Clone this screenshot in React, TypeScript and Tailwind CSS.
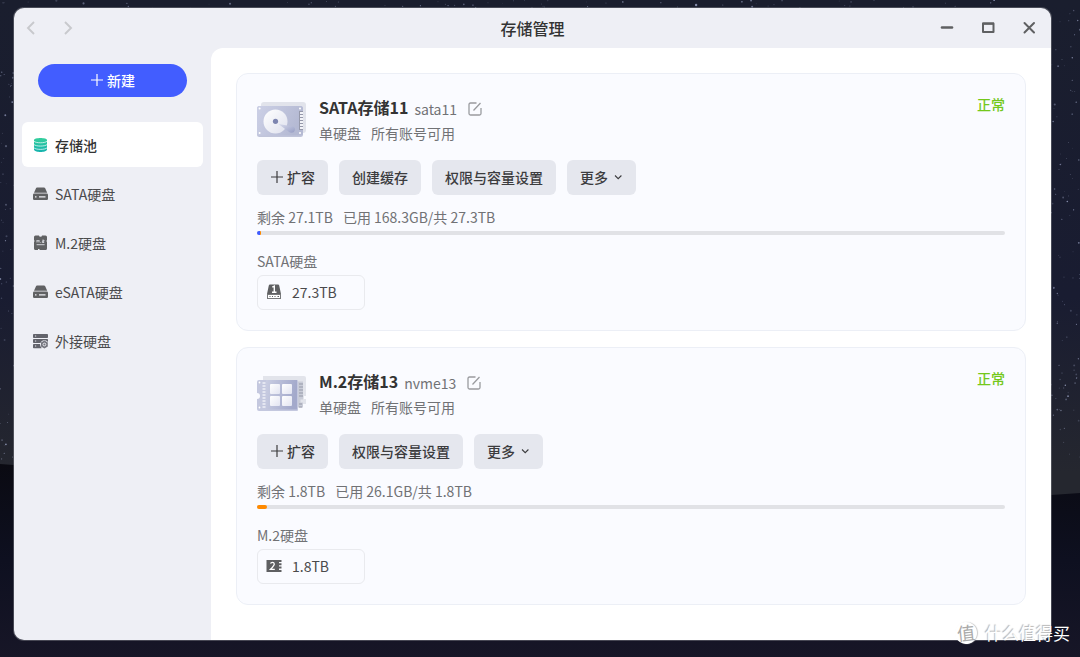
import React from 'react';

interface Segment {
    color: string;
    percent: number;
}

interface Pool {
    id: string;
    name: string;
    alias: string;
    kind: 'sata' | 'm2';
    actions: string[];
    free: string;
    used: string;
    segments: Segment[];
    diskLabel: string;
    diskSize: string;
}

const POOLS: Pool[] = [
    {
        id: 'sata11',
        name: 'SATA存储11',
        alias: 'sata11',
        kind: 'sata',
        actions: ['创建缓存', '权限与容量设置'],
        free: '剩余 27.1TB',
        used: '已用 168.3GB/共 27.3TB',
        segments: [
            { color: '#3f5cff', percent: 0.4 },
            { color: '#ff8a00', percent: 0.15 },
        ],
        diskLabel: 'SATA硬盘',
        diskSize: '27.3TB',
    },
    {
        id: 'nvme13',
        name: 'M.2存储13',
        alias: 'nvme13',
        kind: 'm2',
        actions: ['权限与容量设置'],
        free: '剩余 1.8TB',
        used: '已用 26.1GB/共 1.8TB',
        segments: [{ color: '#ff8a00', percent: 1.3 }],
        diskLabel: 'M.2硬盘',
        diskSize: '1.8TB',
    },
];

// Fixed seed so the sky looks the same on every load
const makeStars = (count: number) => {
    let seed = 7;
    const next = () => {
        seed = (seed * 16807) % 2147483647;
        return seed / 2147483647;
    };
    return Array.from({ length: count }, () => ({
        x: next() * 1080,
        y: next() * 460,
        r: 0.4 + next() * next() * 0.9,
        o: 0.2 + next() * 0.5,
    }));
};

const STARS = makeStars(4000);

const NightSky = () => (
    <svg className="absolute inset-0 h-full w-full" viewBox="0 0 1080 657" preserveAspectRatio="none" aria-hidden="true">
        <defs>
            <linearGradient id="sky" x1="0" y1="0" x2="0" y2="1">
                <stop offset="0" stopColor="#1a1e2e" />
                <stop offset="0.45" stopColor="#191c31" />
                <stop offset="0.72" stopColor="#25272f" />
            </linearGradient>
            <linearGradient id="sea" x1="0" y1="0" x2="0" y2="1">
                <stop offset="0" stopColor="#0a0a12" />
                <stop offset="0.5" stopColor="#0e1020" />
                <stop offset="1" stopColor="#171627" />
            </linearGradient>
        </defs>
        <rect width="1080" height="657" fill="url(#sky)" />
        {STARS.map((s, i) => (
            <circle key={i} cx={s.x} cy={s.y} r={s.r} fill="#b4bde0" opacity={s.o} />
        ))}
        <path d="M0 464L14 465C300 480 800 510 1051 495L1080 493V657H0Z" fill="url(#sea)" />
    </svg>
);

const PoolIcon = () => (
    <svg width="16" height="16" viewBox="0 0 16 16" aria-hidden="true">
        <defs>
            <linearGradient id="pool" x1="0" y1="0" x2="0" y2="1">
                <stop offset="0" stopColor="#35cf9c" />
                <stop offset="1" stopColor="#15b2ae" />
            </linearGradient>
        </defs>
        <path
            d="M2 3C2 .2 15 .2 15 3V12.600C15 15.900 2 15.900 2 12.600Z"
            fill="url(#pool)"
        />
        <path
            d="M2 4.200C3.500 6.300 13.500 6.300 15 4.200M2 7.500C3.500 9.600 13.500 9.600 15 7.500M2 10.800C3.500 12.900 13.500 12.900 15 10.800"
            fill="none"
            stroke="#fff"
            strokeWidth="0.7"
        />
    </svg>
);

const DriveIcon = () => (
    <svg width="16" height="16" viewBox="0 0 16 16" aria-hidden="true">
        <path d="M5 1.500h7q.8 0 1.200.8l2 4.500H2l2-4.500q.3-.8 1-.8Z" fill="#606163" />
        <rect x="1" y="7.600" width="15" height="6.400" rx="1.200" fill="#606163" />
        <path d="M3 10.800h1.500M7 10.800h6.500" stroke="#eeeff5" strokeWidth="1.200" />
    </svg>
);

const M2Icon = () => (
    <svg width="16" height="16" viewBox="0 0 16 16" aria-hidden="true">
        <path
            d="M3.500.500h3.500a1.500 1.200 0 0 0 3 0h3.500q1.500 0 1.500 1.500v3.200l-.8.800.8.800V13.500q0 1.500-1.500 1.500H7.500v-1H6v1H3.500Q2 15 2 13.500V6.800L2.800 6 2 5.200V2Q2 .5 3.500.5Z"
            fill="#606163"
        />
        <path d="M5 7.500V5.200l1 1 1-1v2.300M8.500 7.500h.6M10.200 5.200h1.800v1.100h-1.600v1.200h1.800M4.600 9.700h8" fill="none" stroke="#eeeff5" strokeWidth="0.8" />
    </svg>
);

const ExternalIcon = () => (
    <svg width="16" height="16" viewBox="0 0 16 16" aria-hidden="true">
        <rect x="1" y="1" width="15" height="4" rx="0.800" fill="#62636b" />
        <rect x="1" y="6" width="15" height="4" rx="0.800" fill="#62636b" />
        <rect x="1" y="11" width="9" height="4.200" rx="0.800" fill="#62636b" />
        <path d="M3 3h1.200M3 8h1.200M3 13h1.200" stroke="#eeeff5" strokeWidth="0.9" />
        <circle cx="12.400" cy="11.500" r="4.300" fill="#eeeff5" />
        <path d="M12.400 7.600l3.400 1.900v4l-3.400 1.900-3.400-1.900v-4Z" fill="#75767f" />
        <circle cx="12.400" cy="11.500" r="1.400" fill="none" stroke="#eeeff5" strokeWidth="0.900" />
    </svg>
);

const SataArt = () => (
    <svg width="50" height="36" viewBox="0 0 50 36" className="shrink-0" aria-hidden="true">
        <defs>
            <linearGradient id="hdd" x1="0" y1="0" x2="1" y2="0.300">
                <stop offset="0" stopColor="#ccd0e6" />
                <stop offset="1" stopColor="#b4b9d3" />
            </linearGradient>
            <linearGradient id="platter" x1="0" y1="0" x2="1" y2="1">
                <stop offset="0" stopColor="#fff" />
                <stop offset="1" stopColor="#dfe1ee" />
            </linearGradient>
            <linearGradient id="arm" x1="0" y1="0" x2="1" y2="1">
                <stop offset="0" stopColor="#d9dcec" />
                <stop offset="1" stopColor="#969dc4" />
            </linearGradient>
        </defs>
        <rect x="4" y="0" width="45" height="31" rx="3" fill="#e1e3eb" />
        <rect x="0" y="4" width="46" height="31" rx="2.500" fill="#c0c4da" />
        <rect x="0" y="4" width="46" height="29.500" rx="2.500" fill="url(#hdd)" />
        <rect x="42" y="9" width="4" height="19" fill="#9598aa" />
        <path d="M43 11h3M43 14h3M43 17h3M43 20h3M43 23h3M43 26h3" stroke="#f2f3f8" strokeWidth="1.900" />
        <circle cx="18.500" cy="19.500" r="12" fill="url(#platter)" />
        <circle cx="18.500" cy="19.300" r="2.600" fill="#7d85b0" />
        <path d="M21.500 22l14.500 2.500a3.300 3.300 0 0 1-1.500 6.300q-1.500 0-3-1.300Z" fill="url(#arm)" />
        <circle cx="2.600" cy="6.500" r="1" fill="#fff" />
        <circle cx="2.600" cy="31" r="1" fill="#fff" />
        <circle cx="43" cy="6.500" r="1" fill="#fff" />
        <circle cx="43" cy="31" r="1" fill="#fff" />
    </svg>
);

const M2Art = () => (
    <svg width="50" height="36" viewBox="0 0 50 36" className="shrink-0" aria-hidden="true">
        <defs>
            <linearGradient id="board" x1="0" y1="0" x2="1" y2="0.200">
                <stop offset="0" stopColor="#c9cde2" />
                <stop offset="1" stopColor="#a3a9cb" />
            </linearGradient>
            <linearGradient id="chip" x1="0" y1="0" x2="1" y2="1">
                <stop offset="0" stopColor="#fff" />
                <stop offset="1" stopColor="#e2e4f1" />
            </linearGradient>
        </defs>
        <path d="M6 0h41q2 0 2 2v18h-2v3h2v5H6Z" fill="#e2e4eb" />
        <path d="M2 4h38q1 0 1 1v29q0 1-1 1H2q-2 0-2-2v-10a3 3 0 0 0 0-6V6q0-2 2-2Z" fill="#c4c8df" />
        <path d="M9 4h31v29.500H9Z" fill="url(#board)" />
        <path d="M5.500 7h3M5.500 10h3M5.500 13h3M5.500 16h3M5.500 19h3M5.500 22h3M5.500 25h3M5.500 28h3M5.500 31h3" stroke="#eef0f7" strokeWidth="1.600" />
        <path d="M41 5.500h5v18h-2.500v3H46v5h-5Z" fill="#c9ccd8" />
        <path d="M42 8h4M42 11h4M42 14h4M42 17h4M42 20h4M42 28h3M42 31h3" stroke="#9599a8" strokeWidth="1" />
        <rect x="13" y="8" width="10" height="10" rx="1" fill="url(#chip)" />
        <rect x="25" y="8" width="10" height="10" rx="1" fill="url(#chip)" />
        <rect x="13" y="20" width="10" height="10" rx="1" fill="url(#chip)" />
        <rect x="25" y="20" width="10" height="10" rx="1" fill="url(#chip)" />
        <circle cx="2.500" cy="6.500" r="0.900" fill="#fff" />
        <circle cx="2.500" cy="31.500" r="0.900" fill="#fff" />
    </svg>
);

const SataSlot = () => (
    <svg width="16" height="16" viewBox="0 0 16 16" aria-hidden="true">
        <path d="M4 .5h8q1 0 1.200 1L15 10H1L2.800 1.500Q3 .5 4 .5Z" fill="#5f6062" />
        <path d="M6.300 3.200L8.300 2.200V8.200M6 8.200h4.500" fill="none" stroke="#fff" strokeWidth="1.400" />
        <rect x="1.500" y="10.500" width="13" height="4" fill="#fff" stroke="#77787a" strokeWidth="1" />
        <path d="M3.500 12.500h1M6 12.500h1M8.500 12.500h1M11.500 12.500h1.500" stroke="#5f6062" strokeWidth="1.200" />
    </svg>
);

const M2Slot = () => (
    <svg width="16" height="16" viewBox="0 0 16 16" aria-hidden="true">
        <path d="M.5 2h15v2H13v1.300h2.500v2H13v1.300h2.500v2H13V12h2.500v2H.5V2Z" fill="#5f6062" />
        <path d="M4.500 5.600Q5 4.300 6.500 4.300T8.300 6Q8.300 7.500 4.500 11.300H8.800" fill="none" stroke="#fff" strokeWidth="1.300" />
    </svg>
);

const PlusIcon = () => (
    <svg width="14" height="14" viewBox="0 0 14 14" aria-hidden="true">
        <path d="M7 1v12M1 7h12" stroke="currentColor" strokeWidth="1.200" />
    </svg>
);

const EditIcon = () => (
    <svg width="16" height="16" viewBox="0 0 16 16" aria-hidden="true">
        <path d="M9.500 2H3.500Q2 2 2 3.500v9Q2 14 3.500 14h9q1.500 0 1.500-1.500V7M6.500 9.500l7-7.500" fill="none" stroke="#9a9b9f" strokeWidth="1.300" />
    </svg>
);

const NAV_ITEMS = [
    { label: '存储池', Icon: PoolIcon },
    { label: 'SATA硬盘', Icon: DriveIcon },
    { label: 'M.2硬盘', Icon: M2Icon },
    { label: 'eSATA硬盘', Icon: DriveIcon },
    { label: '外接硬盘', Icon: ExternalIcon },
];

const TitleBar = () => (
    <header className="grid h-10 shrink-0 grid-cols-[1fr_auto_1fr] items-center">
        <div className="flex text-[#c8c9cd]">
            <button aria-label="后退" className="flex h-10 w-9 items-center justify-center">
                <svg width="16" height="16" viewBox="0 0 16 16">
                    <path d="M10 2L4 8l6 6" fill="none" stroke="currentColor" strokeWidth="1.900" />
                </svg>
            </button>
            <button aria-label="前进" className="flex h-10 w-9 items-center justify-center">
                <svg width="16" height="16" viewBox="0 0 16 16">
                    <path d="M5 2l6 6-6 6" fill="none" stroke="currentColor" strokeWidth="1.900" />
                </svg>
            </button>
        </div>
        <h1 className="text-base font-medium text-[#333]">存储管理</h1>
        <div className="flex justify-end pr-0.5 text-[#5f6062]">
            <button aria-label="最小化" className="flex h-10 w-[41px] items-center justify-center">
                <svg width="16" height="16" viewBox="0 0 16 16">
                    <path d="M3 7.500h10" stroke="currentColor" strokeWidth="2.600" strokeLinecap="round" />
                </svg>
            </button>
            <button aria-label="最大化" className="flex h-10 w-[41px] items-center justify-center">
                <svg width="16" height="16" viewBox="0 0 16 16">
                    <path d="M3 3.500h10.500v8.500H3Z" fill="none" stroke="currentColor" strokeWidth="2" strokeLinejoin="round" />
                    <path d="M2.500 3.700H14" stroke="currentColor" strokeWidth="2.200" />
                </svg>
            </button>
            <button aria-label="关闭" className="flex h-10 w-[41px] items-center justify-center">
                <svg width="16" height="16" viewBox="0 0 16 16">
                    <path d="M3.500 3l9.500 9.500M13 3l-9.500 9.500" stroke="currentColor" strokeWidth="2" strokeLinecap="round" />
                </svg>
            </button>
        </div>
    </header>
);

const Sidebar = () => (
    <aside className="w-[197px] shrink-0 px-2 pt-4">
        <button className="mx-4 flex h-[33px] w-[149px] items-center justify-center gap-[3px] rounded-full bg-[#425dff] pb-0.5 text-sm font-medium text-white">
            <PlusIcon />
            新建
        </button>
        <nav className="mt-[25px] flex flex-col gap-1">
            {NAV_ITEMS.map(({ label, Icon }, i) => (
                <a
                    key={label}
                    href="#"
                    className={`flex h-[45px] items-center gap-[7px] rounded-md px-2.5 text-sm ${
                        i === 0 ? 'bg-white font-medium text-[#333]' : 'text-[#4a4a4c]'
                    }`}
                >
                    <Icon />
                    {label}
                </a>
            ))}
        </nav>
    </aside>
);

const ACTION_CLASS = 'flex h-[35px] items-center gap-[3px] rounded-md bg-[#e5e7ee] px-[13px] pb-0.5 text-sm font-medium text-[#3c3c3e]';

const PoolCard = ({ pool }: { pool: Pool }) => (
    <section className="rounded-xl border border-[#eceff6] bg-[#fafbff] p-5">
        <div className="flex items-center gap-3">
            {pool.kind === 'sata' ? <SataArt /> : <M2Art />}
            <div className="flex-1">
                <div className="flex h-[26px] items-center">
                    <h2 className="text-base font-bold text-[#333]">{pool.name}</h2>
                    <span className="ml-1.5 pt-1 text-sm text-[#717275]">{pool.alias}</span>
                    <button aria-label="编辑" className="ml-2.5 pt-1">
                        <EditIcon />
                    </button>
                </div>
                <p className="flex gap-2.5 text-sm leading-[26px] text-[#717275]">
                    <span>单硬盘</span>
                    <span>所有账号可用</span>
                </p>
            </div>
            <span className="self-start text-sm leading-5 font-medium text-[#74c81b]">正常</span>
        </div>

        <div className="mt-3.5 flex gap-[11px]">
            <button className={ACTION_CLASS}>
                <PlusIcon />
                扩容
            </button>
            {pool.actions.map(action => (
                <button key={action} className={ACTION_CLASS}>
                    {action}
                </button>
            ))}
            <button className={ACTION_CLASS}>
                更多
                <svg width="12" height="10" viewBox="0 0 12 10" aria-hidden="true">
                    <path d="M4 3.500l3.200 3.200 3.200-3.200" fill="none" stroke="currentColor" strokeWidth="1.100" />
                </svg>
            </button>
        </div>

        <p className="mt-3 flex gap-2.5 text-sm leading-5 text-[#717275]">
            <span>{pool.free}</span>
            <span>{pool.used}</span>
        </p>
        <div className="mt-1 flex h-1 overflow-hidden rounded-full bg-[#e1e2e6]">
            {pool.segments.map(seg => (
                <div
                    key={seg.color}
                    className="h-full last:rounded-r-full"
                    style={{ width: `${seg.percent}%`, backgroundColor: seg.color }}
                />
            ))}
        </div>

        <p className="mt-4 text-sm leading-5 text-[#717275]">{pool.diskLabel}</p>
        <div className="mt-1 flex h-[35px] w-[108px] items-center gap-2.5 rounded-md border border-[#e9eaee] px-2 pb-0.5 text-sm text-[#4a4a4c]">
            {pool.kind === 'sata' ? <SataSlot /> : <M2Slot />}
            {pool.diskSize}
        </div>
    </section>
);

const Watermark = () => (
    <div className="absolute right-2.5 bottom-3 flex items-center gap-2 text-white">
        <span className="flex h-[22px] w-[22px] -rotate-6 items-center justify-center rounded-full bg-white pb-0.5 text-lg leading-none text-[#aaa] shadow-[1px_0_1px_#ccc]">
            值
        </span>
        <span className="text-[17px] leading-6 [text-shadow:-1px_-1px_1px_rgba(0,0,0,0.3)]">什么值得买</span>
    </div>
);

const App: React.FC = () => {
    return (
        <div className="relative flex min-h-screen bg-[#171a29] pt-2 pr-[29px] pb-[17px] pl-3.5 font-['Noto_Sans_CJK_SC',sans-serif]">
            <NightSky />
            <div className="relative flex flex-1 flex-col overflow-hidden rounded-[10px] bg-[#eeeff5] shadow-[0_0_0_1px_rgba(120,122,130,0.5)]">
                <TitleBar />
                <div className="flex flex-1">
                    <Sidebar />
                    <main className="flex flex-1 flex-col gap-4 rounded-tl-xl bg-white px-[25px] pt-[25px] pb-[35px]">
                        {POOLS.map(pool => (
                            <PoolCard key={pool.id} pool={pool} />
                        ))}
                    </main>
                </div>
            </div>
            <Watermark />
        </div>
    );
};

export default App;
